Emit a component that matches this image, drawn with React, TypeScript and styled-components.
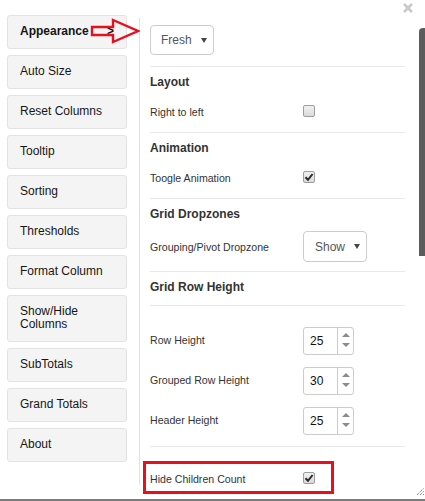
import React from "react";
import styled, { createGlobalStyle } from "styled-components";

const Global = createGlobalStyle`
  html, body { margin: 0; padding: 0; background: #fff; }
  body { font-family: "Liberation Sans", Arial, sans-serif; color: #333; }
  * { box-sizing: border-box; }
`;

const Page = styled.div`
  position: relative;
  width: 425px;
  height: 501px;
  border-bottom: 2px solid #7c7c7c;
  overflow: hidden;
  display: flex;
  align-items: flex-start;
`;

const Sidebar = styled.nav`
  flex: none;
  width: 139px;
  padding: 15px 12px 0 7px;
  display: flex;
  flex-direction: column;
  gap: 6px;
`;

const NavButton = styled.div<{ $active?: boolean }>`
  display: flex;
  align-items: center;
  justify-content: space-between;
  padding: 9px 12px 10px;
  line-height: 13px;
  font-size: 12px;
  font-weight: ${(p) => (p.$active ? 700 : 400)};
  color: #161616;
  background: #f4f4f4;
  border: 1px solid #e3e3e3;
  border-radius: 3px;
`;

const Panel = styled.section`
  flex: none;
  margin-top: 18px;
  width: 286px;
  height: 467px;
  border-left: 1px solid #e2e2e2;
  padding: 7px 0 0 10px;
`;

const Inner = styled.div`
  width: 255px;
  display: flex;
  flex-direction: column;
`;

const Divider = styled.div<{ $mt: number; $mb: number }>`
  border-top: 1px solid #e8e8e8;
  margin: ${(p) => p.$mt}px 0 ${(p) => p.$mb}px;
`;

const Heading = styled.h3<{ $mb?: number }>`
  margin: 0 0 ${(p) => p.$mb ?? 10}px;
  font-size: 12px;
  line-height: 16px;
  font-weight: 700;
  color: #333;
`;

const Row = styled.div`
  display: grid;
  grid-template-columns: 153px auto;
  align-items: center;
  min-height: 24px;
  font-size: 10.6px;
  color: #333;
`;

const HighlightRow = styled(Row)`
  margin: 14px 0 0 -7px;
  width: 191px;
  height: 33px;
  padding: 3px 0 0 4px;
  border: 3px solid #e8101f;
`;

const Select = styled.div<{ $pl: number; $h: number }>`
  display: inline-flex;
  align-items: center;
  justify-content: space-between;
  width: 64px;
  height: ${(p) => p.$h}px;
  padding: 0 6px 0 ${(p) => p.$pl}px;
  border: 1px solid #cccccc;
  border-radius: 4px;
  font-size: 12px;
  color: #555;
  background: #fff;
`;

const Caret = styled.span`
  width: 0;
  height: 0;
  border-left: 3px solid transparent;
  border-right: 3px solid transparent;
  border-top: 5px solid #444;
`;

const CheckBox = styled.span`
  display: inline-flex;
  align-items: center;
  justify-content: center;
  width: 12px;
  height: 12px;
  margin-top: -3px;
  border: 1px solid #9d9d9d;
  border-radius: 2px;
  background: linear-gradient(#f1f1f1, #dadada);
`;

const NumberList = styled.div`
  display: flex;
  flex-direction: column;
  gap: 12px;
`;

const NumberRow = styled(Row)`
  min-height: 28px;
  & > span:first-child {
    margin-top: -3px;
  }
`;

const Spin = styled.div`
  display: flex;
  width: 51px;
  height: 28px;
  border: 1px solid #cccccc;
  border-radius: 3px;
`;

const SpinValue = styled.span`
  flex: 1;
  display: flex;
  align-items: center;
  padding-left: 6px;
  font-size: 12px;
  color: #111;
`;

const SpinButtons = styled.div`
  width: 16px;
  border-left: 1px solid #cccccc;
  display: flex;
  flex-direction: column;
  align-items: center;
  justify-content: center;
  gap: 6px;
  padding-bottom: 2px;
`;

const Tri = styled.span<{ $up?: boolean }>`
  width: 0;
  height: 0;
  border-left: 4px solid transparent;
  border-right: 4px solid transparent;
  ${(p) => (p.$up ? "border-bottom: 4px solid #8a8a8a;" : "border-top: 4px solid #8a8a8a;")}
`;

const Close = styled.svg`
  position: absolute;
  left: 403px;
  top: 3px;
`;

const Thumb = styled.div`
  position: absolute;
  left: 419px;
  top: 28px;
  width: 8px;
  height: 228px;
  background: #5c5c5c;
  border-radius: 4px 0 0 0;
`;

const Grip = styled.svg`
  position: absolute;
  left: 416px;
  top: 487px;
`;

const ArrowMark = styled.svg`
  position: absolute;
  left: 90px;
  top: 17px;
`;

const Check = ({ checked }: { checked?: boolean }) => (
  <CheckBox>
    {checked && (
      <svg width="10" height="10" viewBox="0 0 10 10">
        <path d="M1.5 5.2 L4 7.8 L8.6 2" fill="none" stroke="#2a2a2a" strokeWidth="2" />
      </svg>
    )}
  </CheckBox>
);

const NumberInput = ({ value }: { value: number }) => (
  <Spin>
    <SpinValue>{value}</SpinValue>
    <SpinButtons>
      <Tri $up />
      <Tri />
    </SpinButtons>
  </Spin>
);

const navItems = [
  "Auto Size",
  "Reset Columns",
  "Tooltip",
  "Sorting",
  "Thresholds",
  "Format Column",
  "Show/Hide Columns",
  "SubTotals",
  "Grand Totals",
  "About",
];

export default function App() {
  return (
    <>
      <Global />
      <Page>
        <Sidebar>
          <NavButton $active>
            <span>Appearance</span>
            <span>&gt;</span>
          </NavButton>
          {navItems.map((n) => (
            <NavButton key={n}>{n}</NavButton>
          ))}
        </Sidebar>
        <Panel>
          <Inner>
            <Select $pl={10} $h={30}>
              <span>Fresh</span>
              <Caret />
            </Select>
            <Divider $mt={11} $mb={7} />
            <Heading>Layout</Heading>
            <Row>
              <span>Right to left</span>
              <Check />
            </Row>
            <Divider $mt={8} $mb={7} />
            <Heading>Animation</Heading>
            <Row>
              <span>Toogle Animation</span>
              <Check checked />
            </Row>
            <Divider $mt={8} $mb={7} />
            <Heading $mb={9}>Grid Dropzones</Heading>
            <Row>
              <span>Grouping/Pivot Dropzone</span>
              <Select $pl={11} $h={31}>
                <span>Show</span>
                <Caret />
              </Select>
            </Row>
            <Divider $mt={9} $mb={7} />
            <Heading $mb={0}>Grid Row Height</Heading>
            <Divider $mt={10} $mb={21} />
            <NumberList>
              <NumberRow>
                <span>Row Height</span>
                <NumberInput value={25} />
              </NumberRow>
              <NumberRow>
                <span>Grouped Row Height</span>
                <NumberInput value={30} />
              </NumberRow>
              <NumberRow>
                <span>Header Height</span>
                <NumberInput value={25} />
              </NumberRow>
            </NumberList>
            <Divider $mt={11} $mb={0} />
            <HighlightRow>
              <span>Hide Children Count</span>
              <Check checked />
            </HighlightRow>
          </Inner>
        </Panel>

        <Close width="10" height="10" viewBox="0 0 10 10">
          <path d="M1 1 L9 9 M9 1 L1 9" stroke="#c9c9c9" strokeWidth="2.6" />
        </Close>
        <Thumb />
        <Grip width="9" height="9" viewBox="0 0 9 9">
          <path d="M1 8 L8 1 M4 8 L8 4 M7 8 L8 7" stroke="#555" strokeWidth="1" strokeDasharray="1 1" />
        </Grip>
        <ArrowMark width="50" height="28" viewBox="0 0 50 28">
          <polygon
            points="2,10 23,10 23,3 48,14 23,25 23,18 2,18"
            fill="none"
            stroke="#e8101f"
            strokeWidth="2.4"
            strokeLinejoin="miter"
          />
        </ArrowMark>
      </Page>
    </>
  );
}
